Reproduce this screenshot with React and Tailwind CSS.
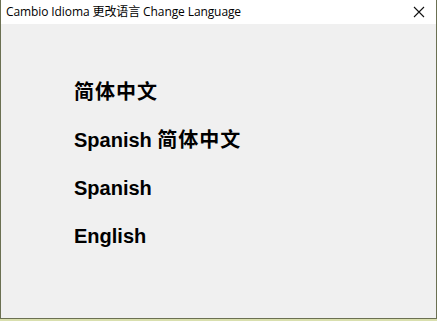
import React from 'react';

const items = [
  { en: '', zh: '简体中文' },
  { en: 'Spanish ', zh: '简体中文' },
  { en: 'Spanish', zh: '' },
  { en: 'English', zh: '' },
];

const CloseIcon = () => (
  <svg width="12" height="12" viewBox="0 0 12 12" className="block">
    <path d="M1 1 L11 11 M11 1 L1 11" stroke="#111" strokeWidth="1.1" fill="none" />
  </svg>
);

const App = () => {
  return (
    <div className="w-[437px] h-[321px] bg-[#d9dfae] flex flex-col">
      <div className="flex-1 flex flex-col border-l border-r border-b border-[#6b7052] bg-[#f0f0f0] mb-[2px]">
        {/* Title bar */}
        <div className="h-[24px] bg-white flex items-center justify-between pl-[5px] pr-[11px]">
          <span
            className="text-[12px] tracking-[-0.1px] text-black leading-none"
            style={{ fontFamily: '"Segoe UI", "Open Sans", "Noto Sans CJK SC", sans-serif' }}
          >
            Cambio Idioma 更改语言 Change Language
          </span>
          <CloseIcon />
        </div>

        {/* Options */}
        <div className="flex flex-col pl-[73px] pt-[55px] gap-[23px]">
          {items.map((item, i) => (
            <div
              key={i}
              className="h-[25px] flex items-center text-[20px] font-bold text-black leading-none cursor-pointer whitespace-pre"
              style={{ fontFamily: '"Liberation Sans", Arial, "Noto Sans CJK SC", sans-serif' }}
            >
              {item.en}
              {item.zh && <span className="tracking-[1px]">{item.zh}</span>}
            </div>
          ))}
        </div>
      </div>
    </div>
  );
};

export default App;
